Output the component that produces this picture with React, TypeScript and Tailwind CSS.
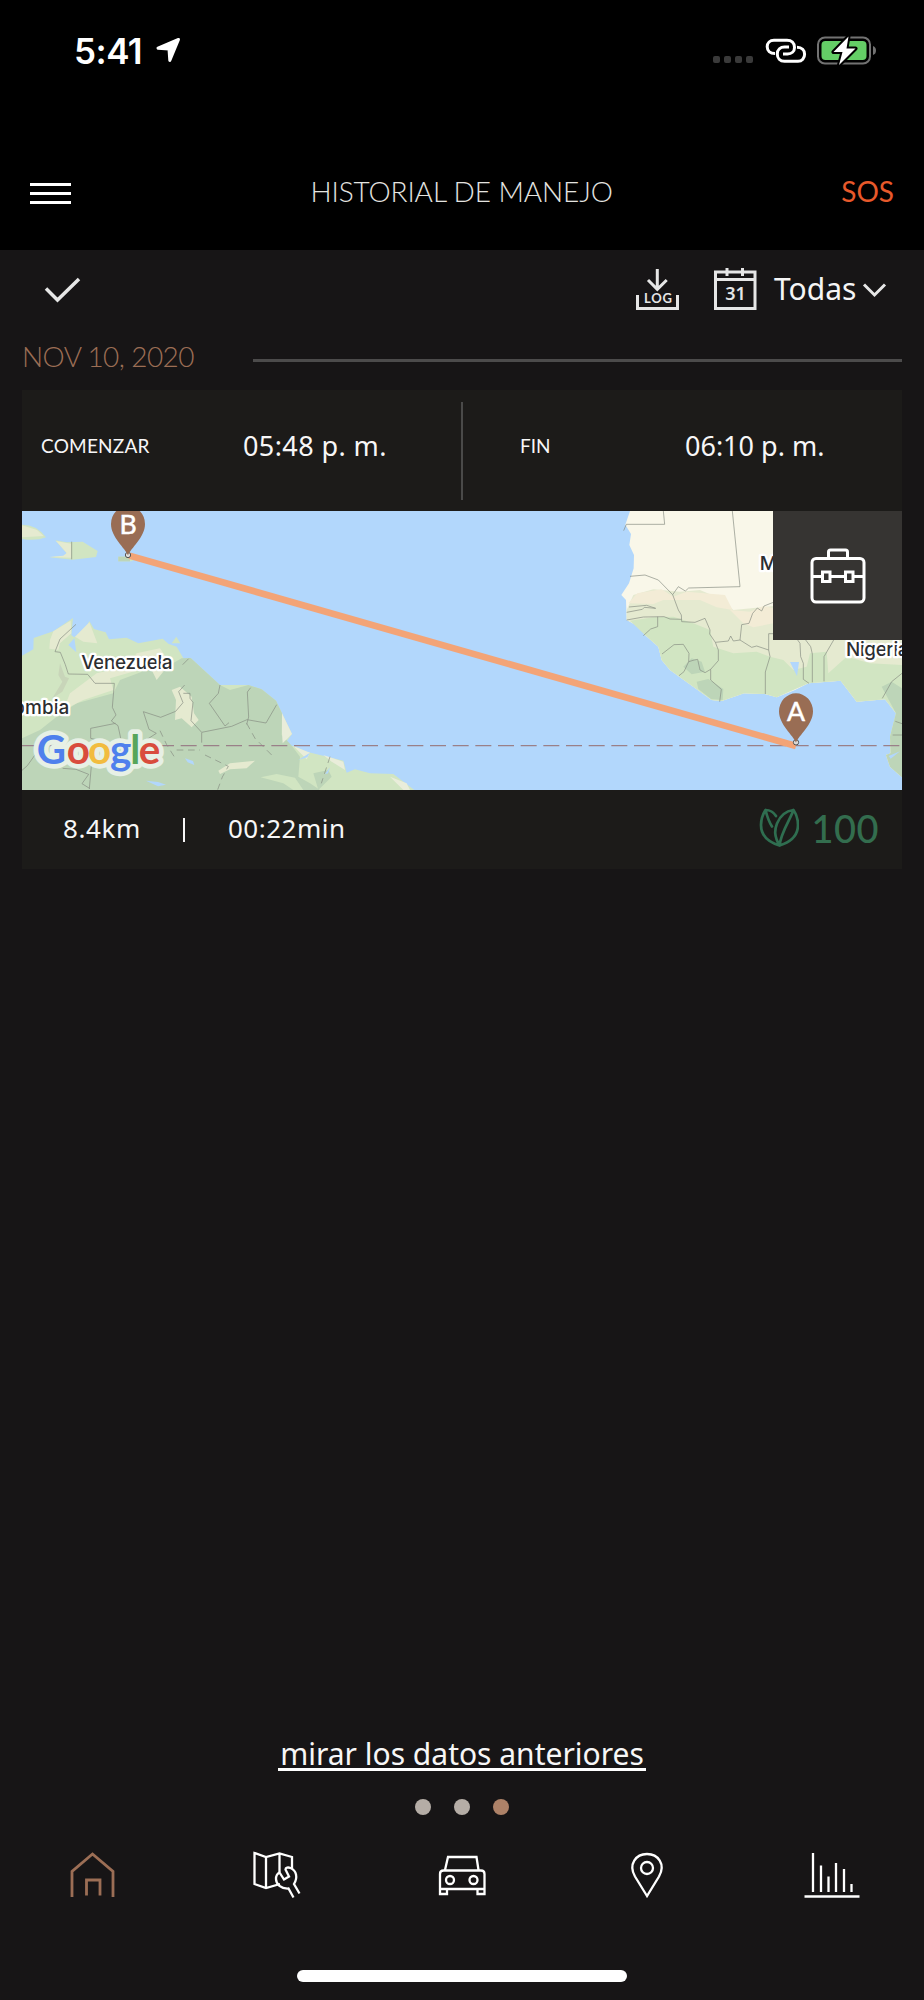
import type { ReactNode } from 'react'

function StatusBar() {
  return (
    <div className="flex h-[102px] items-center pl-[74px] pr-[47px]">
      <span className="w-[82px] font-['Inter',sans-serif] text-[35px] font-semibold leading-none tracking-[-0.5px] text-white">5:41</span>
      <svg width="25" height="26" viewBox="0 0 25 26" className="-mt-0.5" fill="#fff" stroke="#fff" strokeWidth="3" strokeLinejoin="round">
        <path d="M22.5 2.5 2 11.2l11 .8.8 11.5z" />
      </svg>
      <div className="ml-auto flex items-center">
        <div className="mt-[17px] flex gap-1">
          {[0, 1, 2, 3].map((i) => (
            <span key={i} className="size-[7px] rounded-xs bg-[#3a3a3a]" />
          ))}
        </div>
        <svg width="42" height="26" viewBox="0 0 42 26" className="ml-3" fill="none" stroke="#fff" strokeWidth="3">
          <path d="M10 15.5C5 15.5 2.200 12.500 2.200 8.800 2.200 5 5 2.200 9 2.200H22C26.500 2.200 29.500 5 29.500 9.500 29.500 13.500 26.500 16 22.500 16H18" />
          <path d="M32 9.200C37 9.200 39.600 12.500 39.600 16.200 39.600 20 37 23.300 33 23.300H19.500C15 23.300 12.300 20 12.300 16 12.300 11.500 15.500 9 19.500 9H24" />
        </svg>
        <svg width="60" height="32" viewBox="0 0 60 32" className="ml-[10px]">
          <rect x="1" y="2.500" width="52" height="26" rx="7" fill="none" stroke="#727272" strokeWidth="2" />
          <rect x="4.500" y="6" width="45" height="19" rx="4" fill="#64ce66" />
          <path d="M56 11v9q3-1 3-4.500t-3-4.500z" fill="#727272" />
          <path d="M31.500 1.500 16.500 17h9L22 30 38.500 13.500h-9z" fill="#fff" stroke="#000" strokeWidth="4" paintOrder="stroke" strokeLinejoin="round" />
        </svg>
      </div>
    </div>
  )
}

function Header() {
  return (
    <header className="h-[250px] bg-black">
      <StatusBar />
      <div className="flex h-[148px] items-start justify-between pl-[30px] pr-[30px] pt-[73px]">
        <div className="mt-2 flex w-[52px] flex-col gap-1.5">
          <span className="h-[3px] w-[41px] bg-white" />
          <span className="h-[3px] w-[41px] bg-white" />
          <span className="h-[3px] w-[41px] bg-white" />
        </div>
        <h1 className="whitespace-nowrap font-['Lato',sans-serif] text-[28px] font-light leading-8 tracking-[-0.1px] text-[#e4e4e0]">HISTORIAL DE MANEJO</h1>
        <span className="font-['Lato',sans-serif] text-[28px] leading-8 text-[#e8592b]">SOS</span>
      </div>
    </header>
  )
}

function Toolbar() {
  return (
    <div className="flex h-[84px] items-start pl-11 pt-[17px] text-[#e6e6e6]">
      <svg width="37" height="28" viewBox="0 0 37 28" className="mt-[9px]" fill="none" stroke="currentColor" strokeWidth="3.500">
        <path d="M2 12.500 13.500 24 35 3" />
      </svg>
      <svg width="43" height="44" viewBox="0 0 43 44" className="ml-[555px]" fill="none" stroke="currentColor" strokeWidth="3">
        <path d="M21.300 2v19M12 13l9.300 9.300L30.700 13M1.500 28v13.500h40V28" />
        <text x="8" y="36" textLength="28" fill="currentColor" stroke="none" className="font-['Lato',sans-serif] text-[13px] font-bold">LOG</text>
      </svg>
      <svg width="43" height="44" viewBox="0 0 43 44" className="ml-[35px]" fill="none" stroke="currentColor" strokeWidth="3">
        <path d="M1.500 5h39.500v36.500h-39.500zM1.500 12.500h39.500M13 1v8M28.500 1v8" />
        <text x="21.500" y="33" fill="currentColor" stroke="none" textAnchor="middle" className="font-['Noto_Sans',sans-serif] text-[18px] font-semibold">31</text>
      </svg>
      <span className="ml-[17px] w-[88px] pt-0.5 font-['Noto_Sans',sans-serif] text-[30px] leading-10 text-[#f5f5f5]">Todas</span>
      <svg width="25" height="17" viewBox="0 0 25 17" className="mt-[15px]" fill="none" stroke="currentColor" strokeWidth="3">
        <path d="m2 2.500 10.500 10.500L23 2.500" />
      </svg>
    </div>
  )
}

function Pin({ x, y, label }: { x: number; y: number; label: string }) {
  return (
    <g transform={`translate(${x} ${y})`}>
      <circle r="8" cy="-5" fill="#ddd" stroke="#555" strokeWidth="3" />
      <path d="M0-4C-8-25-51-58-51-98a51 54 0 0 1 102 0C51-58 8-25 0-4z" fill="#996d54" />
      <text y="-68" fill="#fff" stroke="#fff" strokeWidth="1.500" textAnchor="middle" className="font-['Lato',sans-serif] text-[80px]">{label}</text>
    </g>
  )
}

const googleLetters = [
  { char: 'G', x: 110, color: '#4f80ed' },
  { char: 'o', x: 200, color: '#d94c3d' },
  { char: 'o', x: 264, color: '#f2bc3f' },
  { char: 'g', x: 330, color: '#4f80ed' },
  { char: 'l', x: 391, color: '#57a55a' },
  { char: 'e', x: 416, color: '#d94c3d' },
]

function RouteMap() {
  return (
    <svg width="880" height="279" viewBox="66 33 2640 837" className="block">
      <rect x="66" y="33" width="2640" height="837" fill="#b2d7fc" />

      {/* South America */}
      <path d="M66 467 100 448 101 414 160 394 219 354 214 405 222 412 255 392 268 363 282 387 317 397 327 418 380 413 415 430 488 416 505 431 530 440 552 478 572 474 660 555 745 555 785 568 828 602 876 702 852 735 880 738 920 755 1030 782 1040 818 1065 808 1110 820 1180 822 1243 870H66z" fill="#d1e5c2" />
      <path d="M66 715 120 690 170 650 230 610 340 580 360 540 440 510 500 500 545 475 572 474 660 555 690 570 745 555 785 568 828 602 846 640 845 705 876 738 900 770 895 830 930 850 960 870H66z" fill="#bdd5b8" />
      <path d="M160 394 212 362 214 400 180 430 175 450 148 446 150 420zM225 410 268 367 292 430 250 425zM410 460 480 445 510 490 470 540 450 500 330 535 340 570 250 600 190 630 210 580 290 520 380 500zM515 570 540 560 575 590 582 640 596 660 575 682 545 655 525 660 528 600zM655 812 690 790 765 782 740 805 690 808 660 822z" fill="#e5ead0" />
      <path d="m846 640 30 62-28 28-2-30zM880 738l50 20-10 20zM970 765l60 20 5 25-40-25zM1170 830l50 20 10 20h-20z" fill="#e9edda" />
      <path d="M780 835 830 822 900 835 905 860 850 855zM940 820l45-10 10 20-40 40z" fill="#bdd5b8" />
      <path d="M782 832 830 822 885 833 910 870H880L850 850z" fill="#d1e5c2" />
      <path d="m205 435 18-20 6 42zM555 775l24 8 4 12-20-8zM438 842l36 4 24 8-24 5zM895 780l35-22-8 14zM975 822l15-20-6 18z" fill="#b2d7fc" />
      <path d="m180 490 15 40 12 5-20 40-30 20 30-50-12-20z" fill="#c8d5b9" />

      {/* Caribbean islands */}
      <path d="M66 74q45 0 72 38-30 12-72 5zM166 121l34 6 48-2 45 28-5 18-70 8-70-7 42-4 10-8zM355 170h60l-20 14h-40zM515 430l14-20 12 20z" fill="#d1e5c2" />
      <path d="m66 76 45 14 20 18-65 4zM168 123l45 8v42l-65-2 42-4 10-8z" fill="#e5ead0" />
      <path d="M355 170h35v14h-35z" fill="#bdd5b8" />

      {/* West Africa */}
      <path d="M1890 33 1876 74 1893 102 1888 135 1902 165 1901 205 1887 250 1864 285 1878 300 1880 360 1920 382 1935 405 1975 440 1985 480 2010 510 2135 600 2165 603 2232 580 2295 582 2330 592 2385 570 2425 550 2522 542 2570 605 2655 598 2688 640 2687 665 2670 710 2672 760 2658 765 2670 800 2706 832V33z" fill="#f9f7e9" />
      <path d="M1880 330 1900 285 1960 268 2040 275 2100 270 2170 300 2200 330 2320 318 2330 400H2706V832L2670 800 2658 765 2672 760 2670 710 2688 640 2655 598 2570 605 2522 542 2425 550 2330 592 2295 582 2232 580 2165 603 2135 600 2010 510 1985 480 1975 440 1935 405 1920 382 1880 360z" fill="#e5ead0" />
      <path d="M1885 310 1912 280 1985 268 2020 290 2060 275 2175 285 2198 330 2150 322 2100 300 1990 300 1960 312zM2190 330 2250 335 2290 318 2320 325V370L2260 382 2230 370z" fill="#f3ecd6" />
      <path d="M1890 362 1960 352 2020 350 2080 370 2130 390 2140 440 2200 460 2270 455 2310 470 2350 480 2380 510 2420 500 2430 460 2480 455 2485 520 2540 470 2610 490 2706 495V832L2670 800 2658 765 2672 760 2670 710 2688 640 2655 598 2570 605 2522 542 2425 550 2330 592 2295 582 2232 580 2165 603 2135 600 2010 510 1985 480 1975 440 1935 405z" fill="#d1e5c2" />
      <path d="m2050 500 25-25 30 10 10 30-40 8zM2090 545l35-8 45 30-2 33-35-3-38-30zM2645 560l30-15 31 20v267l-36-32-12-35 14-5-2-50 18-70z" fill="#bdd5b8" />
      <path d="M2370 486h27l-6 42zM2666 768l34-14-28 22z" fill="#b2d7fc" />

      {/* Borders */}
      <g fill="none" stroke="#858b80" strokeWidth="2">
        <path d="m228 373-48 44-15 38 16 2 15 37 9 28 58 1 22 27h58l-6 72 11 23-14 18 20 14 9 42 23 32 29-16 54-35-22-12-17-53 52 17 45-18 22-26-13-33 18-20M548 494l18-18M550 580h20v15l9 12-6 55 32 35 90-18 46-20 57 10 32-55M660 555l-5 25-27 30 47 68 12-10M752 563l-10 13 4 75-6 22M347 670l-75 15v30l20 5-30 20M66 811l16-14 40-56M188 805l40 3 38 15-20 28 24 15M268 866l8-90M605 698v30M215 125v53" />
        <path d="m480 692 20 42 22 35M740 670l25 45 55 55M615 765l70 34-18 32-14 38M990 770l-26 80M530 750h70" strokeDasharray="20 14" />
        <path d="M1871 92 1879 73H1994L1990 33M2197 33 2220 260 2066 264 2056 273 2035 260 2018 284 2035 330 2044 345 2045 365 2085 367 2115 355 2130 390 2129 402 2146 427 2185 423 2192 408 2200 423 2220 420 2225 374 2247 370 2258 340 2272 324 2285 333 2292 318 2330 303M1890 229 1935 225 1975 240 2018 284M1880 337 1927 328 1933 322 1967 325 1940 316 1887 321M1880 360 1930 351 1992 350 2010 357 2045 358M1973 350V380L1952 387 1930 407M1986 462 2022 434 2050 433 2067 460 2066 485 2083 480 2093 478 2100 510 2115 518 2132 508 2155 482 2155 450 2146 427M2066 485 2052 515 2037 527M2132 508V540L2164 568 2159 605M2220 420 2255 442 2270 438 2306 450 2310 470 2296 516V582M2306 450V401H2325M2393 420 2400 430 2402 470 2410 490V538L2427 550M2417 420 2432 440 2437 462V547M2501 420 2472 470V544M2706 520 2675 545 2647 595M2686 664l20 7M2678 705h28" />
      </g>
      <path d="M66 737H2706" stroke="#9a8088" strokeWidth="4" strokeDasharray="48 20" fill="none" />

      <path d="M388 167 2388 738" stroke="#f3a477" strokeWidth="20" />
      <Pin x={384} y={170} label="B" />
      <Pin x={2388} y={732} label="A" />

      <g fill="#2c2e31" stroke="#fff" strokeWidth="14" strokeLinejoin="round" paintOrder="stroke" className="font-['Inter',sans-serif] text-[57px] font-medium">
        <text x="244" y="508" textLength="274">Venezuela</text>
        <text x="26" y="641" textLength="182">lombia</text>
        <text x="2279" y="209">Mali</text>
        <text x="2538" y="468" textLength="188">Nigeria</text>
      </g>

      <g className="font-['Lato',sans-serif] text-[121px] font-bold">
        {googleLetters.map((l) => (
          <text key={l.x} x={l.x} y="793" fill="#e7f0e5" stroke="#e7f0e5" strokeWidth="28" strokeLinejoin="round">{l.char}</text>
        ))}
        {googleLetters.map((l) => (
          <text key={l.x} x={l.x} y="793" fill={l.color}>{l.char}</text>
        ))}
      </g>
    </svg>
  )
}

function TripCard() {
  return (
    <section className="mx-[22px] h-[479px] bg-[#1c1b19] text-[#f7f7f7]">
      <div className="flex h-[121px] pt-3">
        <div className="flex h-[98px] w-[441px] items-start border-r-2 border-[#4a4a49] pl-[19px] pt-[25px]">
          <span className="w-[202px] font-['Lato',sans-serif] text-[19px] leading-[38px] tracking-[0.2px]">COMENZAR</span>
          <span className="font-['Noto_Sans',sans-serif] text-[27px] leading-[38px] tracking-[0.4px]">05:48 p. m.</span>
        </div>
        <div className="flex h-[98px] items-start pl-[57px] pt-[25px]">
          <span className="w-[165px] font-['Lato',sans-serif] text-[19px] leading-[38px]">FIN</span>
          <span className="font-['Noto_Sans',sans-serif] text-[27px] leading-[38px]">06:10 p. m.</span>
        </div>
      </div>
      <div className="relative">
        <RouteMap />
        <div className="absolute right-0 top-0 flex size-[129px] items-center justify-center bg-[#363432]">
          <svg width="56" height="56" viewBox="0 0 56 56" fill="none" stroke="#fff" strokeWidth="3">
            <rect x="2" y="10.500" width="52" height="43.500" rx="4" />
            <path d="M18.500 10V4q0-2 2-2h15q2 0 2 2v6M2 28.500h10M20 28.500h15M44 28.500h10M12.500 24h7.500v9.500h-7.500zM35.500 24h7.500v9.500h-7.500z" />
          </svg>
        </div>
      </div>
      <div className="flex h-[75px] items-center pl-[41px] font-['Noto_Sans',sans-serif] text-[26px] leading-none">
        <span className="w-[120px] tracking-[0.6px]">8.4km</span>
        <span className="mt-1 h-6 w-0.5 bg-[#f7f7f7]" />
        <span className="ml-[43px] tracking-[0.5px]">00:22min</span>
        <svg width="40" height="40" viewBox="0 0 40 40" className="ml-auto" fill="none" stroke="#2f6e50" strokeWidth="2.700" strokeLinecap="round" strokeLinejoin="round">
          <path d="M20.500 37.500C9 34 2 27 2 17 2 10 4 6 6.500 2 11 2 14.500 4 17 8M6.500 2C8 8 10 14 13 18.500M20.500 37.500C15 28 15.500 22 18 15.500 21 8 27 3 34.500 2 38 7 39 11 39 17 39 27 32 34 20.500 37.500ZM34.500 2C31 12 22 24 20.500 37.500" />
        </svg>
        <span className="ml-3 mr-[23px] font-['Lato',sans-serif] text-[38px] font-medium tracking-[0.5px] text-[#336d4e]">100</span>
      </div>
    </section>
  )
}

function TabIcon({ children, color = '#fff' }: { children: ReactNode; color?: string }) {
  return (
    <svg width="60" height="50" viewBox="0 0 60 50" fill="none" stroke={color} strokeWidth="2.300">
      {children}
    </svg>
  )
}

function TabBar() {
  return (
    <nav className="grid h-[124px] w-[924px] grid-cols-5 justify-items-center pt-1">
      <TabIcon color="#9c6e55">
        <path strokeWidth="2.800" d="M10 47V21.500L30.500 4 51 21.500V47M24.500 45.500V30h13.500v15.500" />
      </TabIcon>
      <TabIcon>
        <path d="M33 34 19 38 7.500 34V3L19 7 32.500 3.500 45 7v11M19 7v31M32.500 3.500V22" />
        <path d="m46.500 47.500-5-9C34 39 29 34 29 29c0-3 1.500-5.500 3.500-6.500l4.500 7 5-3-3.500-7c0-2 2.500-2.500 5-1.500 6 2.500 7.500 9.500 3.500 16l5.500 9.500" />
      </TabIcon>
      <TabIcon>
        <path d="M13 20 16 7h28.500l2 13M8 39V24q0-3.500 3.500-3.500H49q3.500 0 3.500 3.500v15zM8 39v5h7v-5M45.500 39v5h7v-5" />
        <circle cx="18" cy="30" r="4" />
        <circle cx="41.500" cy="30" r="4" />
      </TabIcon>
      <TabIcon>
        <path d="M30 46 18 26.500C11 14 19 4 30 4s19 10 12 22.500z" />
        <circle cx="30" cy="18" r="6" />
      </TabIcon>
      <TabIcon>
        <path d="M11 3v39M19 15.500v26.500M26.500 26.500v15.500M34 13v29M42 19v23M49.500 34v8M2.500 46.500h55" />
      </TabIcon>
    </nav>
  )
}

export default function App() {
  return (
    <div className="flex h-[2000px] w-[924px] flex-col overflow-hidden bg-[#171516]">
      <Header />
      <Toolbar />
      <div className="flex h-14 items-start pl-[22px]">
        <h2 className="w-[231px] whitespace-nowrap pt-[6px] font-['Lato',sans-serif] text-[28px] font-light leading-8 tracking-[-0.6px] text-[#9c6e55]">NOV 10, 2020</h2>
        <div className="mt-[25px] h-[3px] w-[649px] bg-[#4c4b4b]" />
      </div>
      <TripCard />
      <div className="mt-auto flex flex-col items-center">
        <a className="flex h-10 w-[368px] justify-center whitespace-nowrap border-b-[3px] border-white font-['Noto_Sans',sans-serif] text-[30px] leading-[46px] text-[#f7f7f7]">mirar los datos anteriores</a>
        <div className="mt-7 flex gap-[23px]">
          <span className="size-4 rounded-full bg-[#b5ada6]" />
          <span className="size-4 rounded-full bg-[#b5ada6]" />
          <span className="size-4 rounded-full bg-[#ae8268]" />
        </div>
        <div className="h-[31px]" />
        <TabBar />
        <div className="mb-[18px] h-3 w-[330px] rounded-full bg-white" />
      </div>
    </div>
  )
}
